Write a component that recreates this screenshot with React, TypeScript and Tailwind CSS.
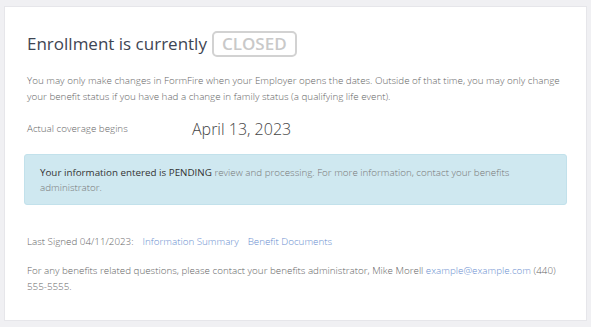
export default function App() {
  return (
    <div
      className="min-h-[327px] w-full bg-[#f0f0f3] px-[4px] pt-[6px] pb-[6px]"
      style={{ fontFamily: '"Open Sans", sans-serif' }}
    >
      <div className="min-h-[315px] border border-[#e6e6ea] bg-white pl-[22px] pr-[19px] pt-[24px] pb-[20px]">
        <div className="flex items-center gap-[5px]">
          <h1 className="text-[17px] font-normal leading-[26px] text-[#3e4553]">Enrollment is currently</h1>
          <span className="flex h-[26px] items-center rounded-[5px] border-2 border-[#d2d2d2] px-[8px] text-[17px] font-semibold text-[#c9c9c9]">
            CLOSED
          </span>
        </div>

        <p className="mt-[16px] text-[9.8px] font-light leading-[16px] text-[#666]">
          You may only make changes in FormFire when your Employer opens the dates. Outside of that time, you may only change your benefit status if you have had a change in family status (a qualifying life event).
        </p>

        <div className="mt-[12px] flex items-center">
          <span className="w-[165px] text-[9.8px] font-light text-[#666]">Actual coverage begins</span>
          <span className="text-[16px] font-light text-[#444]">April 13, 2023</span>
        </div>

        <div className="mt-[13px] ml-[-3px] rounded-[3px] border border-[#c2e1eb] bg-[#cfe8f0] px-[15px] pt-[10px] pb-[9px] text-[9.8px] leading-[15px]">
          <span className="font-normal text-[#333]">Your information entered is PENDING</span>{" "}
          <span className="font-light text-[#777]">review and processing. For more information, contact your benefits administrator.</span>
        </div>

        <div className="mt-[30px] text-[9.8px] font-light text-[#666]">
          Last Signed 04/11/2023:
          <a className="ml-[9px] text-[#6b8fd0]">Information Summary</a>
          <a className="ml-[9px] text-[#6b8fd0]">Benefit Documents</a>
        </div>

        <p className="mt-[13px] text-[9.8px] font-light leading-[16px] text-[#666]">
          For any benefits related questions, please contact your benefits administrator, Mike Morell{" "}
          <a className="text-[#6b8fd0]">example@example.com</a> (440) 555-5555.
        </p>
      </div>
    </div>
  );
}
